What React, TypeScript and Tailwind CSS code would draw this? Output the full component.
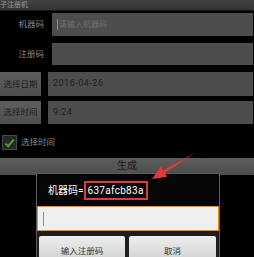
import React from "react";

const font = { fontFamily: '"Roboto", "Noto Sans CJK SC", sans-serif' };

function FieldRow({
  label,
  button,
  value,
  placeholder,
  className,
}: {
  label: string;
  button?: boolean;
  value?: string;
  placeholder?: string;
  className: string;
}) {
  return (
    <div className={`flex gap-[7px] pr-px ${className}`}>
      {button ? (
        <div className="flex w-[41px] shrink-0 items-center justify-center bg-gradient-to-b from-[#5e5e5e] to-[#4e4e4e] text-[8.5px] text-[#1c1c1c]">
          {label}
        </div>
      ) : (
        <div className="flex w-[45px] shrink-0 items-center justify-end pr-px text-[8.5px] text-[#8a8a8a]">
          {label}
        </div>
      )}
      <div className="flex flex-1 items-center bg-[#4d4d4d] pl-[5px]">
        {placeholder ? (
          <>
            <span className="mr-px h-[11px] w-px bg-[#8a8a8a]" />
            <span className="text-[8px] text-[#6e6e6e]">{placeholder}</span>
          </>
        ) : (
          <span className="text-[9px] tracking-[0.5px] text-[#1e1e1e]">
            {value}
          </span>
        )}
      </div>
    </div>
  );
}

export default function App() {
  return (
    <div
      className="relative h-[257px] w-[254px] overflow-hidden bg-black"
      style={font}
    >
      {/* title bar */}
      <div className="flex h-[11px] items-center border-b border-[#1a1a1a] bg-gradient-to-b from-[#424242] to-[#333333] text-[7px] leading-none text-[#9a9a9a]">
        子注册机
      </div>

      <FieldRow
        className="mt-[2px] h-[23px]"
        label="机器码"
        placeholder="请输入机器码"
      />
      <FieldRow className="mt-[7px] h-[22px]" label="注册码" value="" />
      <FieldRow
        className="mt-[7px] h-[24px]"
        label="选择日期"
        button
        value="2016-04-26"
      />
      <FieldRow
        className="mt-[5px] h-[23px]"
        label="选择时间"
        button
        value="9:24"
      />

      {/* checkbox */}
      <div className="mt-[10px] flex h-[17px] items-center gap-[4px] pl-[2px]">
        <div className="flex h-[15px] w-[15px] items-center justify-center border border-[#4a4a4a] bg-[#262626]">
          <svg width="11" height="10" viewBox="0 0 11 10">
            <path
              d="M1.5 5.5 L4.2 8.2 L9.8 1.5"
              fill="none"
              stroke="#4e9a2c"
              strokeWidth="2"
            />
          </svg>
        </div>
        <span className="text-[8.5px] text-[#8a8a8a]">选择时间</span>
      </div>

      {/* generate button */}
      <div className="mt-[7px] flex h-[17px] items-start justify-center bg-gradient-to-b from-[#5e5e5e] to-[#4c4c4c] pt-[3px] text-[10px] leading-none text-[#1a1a1a]">
        生成
      </div>

      {/* dialog */}
      <div className="absolute left-[36px] top-[173px] flex h-[90px] w-[184px] flex-col border border-[#5a5a5a] bg-[#060606]">
        <div className="flex h-[33px] items-center pl-[11px] text-[10px] text-white">
          <span>机器码=</span>
          <span className="border-2 border-[#e03a3e] px-[2px] py-[1px] leading-[13px] tracking-[0.3px]">
            637afcb83a
          </span>
        </div>
        <div className="flex h-[25px] w-[182px] items-center border-[1.5px] border-[#f08c22] bg-[#efefef] pl-[5px]">
          <span className="h-[14px] w-px bg-[#8c8c8c]" />
        </div>
        <div className="flex flex-1 gap-[4px] bg-[#1e1e1e] pl-[2px] pr-[2px] pt-[5px]">
          <div className="flex h-[26px] w-[86px] items-center justify-center rounded-[2px] bg-gradient-to-b from-[#eeeeee] to-[#cfcfcf] pt-[4px] text-[8.5px] text-[#333]">
            输入注册码
          </div>
          <div className="flex h-[26px] w-[87px] items-center justify-center rounded-[2px] bg-gradient-to-b from-[#eeeeee] to-[#cfcfcf] pt-[4px] text-[8.5px] text-[#333]">
            取消
          </div>
        </div>
      </div>

      {/* red arrow */}
      <svg
        className="absolute left-0 top-0"
        width="254"
        height="257"
        viewBox="0 0 254 257"
      >
        <polygon
          points="195,153 164.8,173 167.1,176.8 152,179 160.9,166.6 163.2,170.4"
          fill="#e8363c"
        />
      </svg>
    </div>
  );
}
